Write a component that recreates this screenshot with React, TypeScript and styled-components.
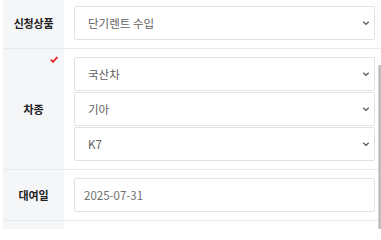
import React from "react";
import styled, { createGlobalStyle } from "styled-components";

const Global = createGlobalStyle`
  html, body { margin: 0; padding: 0; background: #fff; overflow: hidden; }
  body { font-family: "Noto Sans CJK KR", "Noto Sans", sans-serif; }
  * { box-sizing: border-box; }
`;

const Page = styled.div`
  position: relative;
  width: 381px;
  height: 229px;
  overflow: hidden;
  padding-left: 3px;
`;

const Table = styled.div`
  margin-top: -2px;
  display: flex;
  flex-direction: column;
`;

const Row = styled.div`
  display: grid;
  grid-template-columns: 61px 1fr;
  border-bottom: 1px solid #e9eaec;
`;

const Label = styled.div`
  position: relative;
  background: #f5f6f8;
  display: flex;
  align-items: center;
  justify-content: center;
  font-size: 11px;
  font-weight: 700;
  color: #222;
  letter-spacing: -0.2px;
`;

const Check = styled.svg`
  position: absolute;
  top: 7px;
  right: 6px;
  width: 8px;
  height: 7px;
`;

const Field = styled.div`
  display: flex;
  flex-direction: column;
  gap: 1px;
  padding: 8px 6px 8px 10px;
`;

const SelectBox = styled.div`
  height: 34px;
  border: 1px solid #e2e2e2;
  border-radius: 2px;
  background: #fff;
  display: flex;
  align-items: center;
  justify-content: space-between;
  padding: 0 4px 0 13px;
  font-size: 11.5px;
  color: #5f5f5f;
`;

const InputBox = styled.div`
  height: 34px;
  border: 1px solid #e2e2e2;
  border-radius: 2px;
  background: #fff;
  display: flex;
  align-items: center;
  padding: 0 9px;
  font-size: 11.5px;
  color: #707070;
`;

const Chevron = styled.svg`
  width: 8px;
  height: 6px;
  flex: none;
`;

const Thumb = styled.div`
  position: absolute;
  right: 0;
  top: 65px;
  width: 3px;
  height: 200px;
  background: #bdbdbd;
  border-left: 1px solid #d0d0d0;
`;

const Down = () => (
  <Chevron viewBox="0 0 8 6">
    <path d="M1.3 1.8 L4 4.4 L6.7 1.8" fill="none" stroke="#5a5a5a" strokeWidth="1.4" />
  </Chevron>
);

const Select = ({ value }: { value: string }) => (
  <SelectBox>
    <span>{value}</span>
    <Down />
  </SelectBox>
);

export default function App() {
  return (
    <>
      <Global />
      <Page>
        <Table>
          <Row>
            <Label>신청상품</Label>
            <Field>
              <Select value="단기렌트 수입" />
            </Field>
          </Row>
          <Row>
            <Label>
              <Check viewBox="0 0 8 7">
                <path d="M0.8 3.6 L3 5.8 L7.4 1" fill="none" stroke="#e02020" strokeWidth="1.8" />
              </Check>
              차종
            </Label>
            <Field>
              <Select value="국산차" />
              <Select value="기아" />
              <Select value="K7" />
            </Field>
          </Row>
          <Row>
            <Label>대여일</Label>
            <Field>
              <InputBox>2025-07-31</InputBox>
            </Field>
          </Row>
          <Row>
            <Label>&nbsp;</Label>
            <Field>
              <InputBox />
            </Field>
          </Row>
        </Table>
        <Thumb />
      </Page>
    </>
  );
}
